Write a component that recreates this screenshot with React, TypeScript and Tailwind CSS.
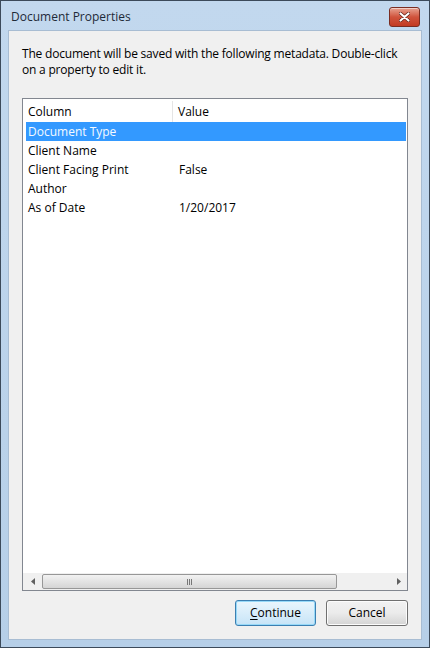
import { useState } from "react";

const rows = [
	{ name: "Document Type", value: "" },
	{ name: "Client Name", value: "" },
	{ name: "Client Facing Print", value: "False" },
	{ name: "Author", value: "" },
	{ name: "As of Date", value: "1/20/2017" },
];

const App = () => {
	const [selected, setSelected] = useState(0);

	return (
		<div
			className="flex h-[648px] w-[430px] flex-col border border-[#3c4a5a] bg-gradient-to-b from-[#c2d8ee] to-[#b6cfe8] text-[12px] text-black"
			style={{ fontFamily: '"Open Sans", "Noto Sans", Arial, sans-serif' }}
		>
			{/* title bar */}
			<div className="flex h-[29px] shrink-0 items-center justify-between pl-[10px] pr-[9px]">
				<span className="mt-[3px] text-[12px] text-[#1e2a38]">Document Properties</span>
				<button className="mt-[2px] flex h-[20px] w-[31px] items-center justify-center rounded-[3px] border border-[#7a2d22] bg-gradient-to-b from-[#e6a190] via-[#d0533c] to-[#c23a22] shadow-[inset_0_1px_0_rgba(255,255,255,0.5)]">
					<svg width="11" height="10" viewBox="0 0 11 10">
						<path d="M1.5 1.5 L9.5 8.5 M9.5 1.5 L1.5 8.5" stroke="#5a1a10" strokeWidth="3.4" strokeLinecap="round" />
						<path d="M1.5 1.5 L9.5 8.5 M9.5 1.5 L1.5 8.5" stroke="#ffffff" strokeWidth="2.2" strokeLinecap="round" />
					</svg>
				</button>
			</div>

			{/* client area */}
			<div className="mx-[7px] mb-[7px] flex flex-1 flex-col border border-[#a8bdd3] bg-[#f0f0f0] px-[13px] pt-[15px] pb-[12px]">
				<p className="leading-[16px] tracking-[-0.2px]">
					The document will be saved with the following metadata. Double-click on a property to edit it.
				</p>

				{/* list view */}
				<div className="mt-[20px] flex h-[493px] flex-col border border-[#828790] bg-white">
					<div className="flex h-[23px] shrink-0 items-center pt-[2px]">
						<div className="flex h-full w-[150px] items-center border-r border-[#e5e5e5] pl-[5px]">
							Column
						</div>
						<div className="pl-[5px]">Value</div>
					</div>
					<div className="flex-1 pl-[3px] pr-[1px]">
						{rows.map((row, i) => (
							<div
								key={row.name}
								onClick={() => setSelected(i)}
								className={`flex h-[19px] items-center pt-[1px] ${
									i === selected ? "bg-[#3399ff] text-[#f4f9ff]" : ""
								}`}
							>
								<span className="w-[150px] pl-[2px]">{row.name}</span>
								<span className="pl-[3px]">{row.value}</span>
							</div>
						))}
					</div>
					{/* horizontal scrollbar */}
					<div className="flex h-[17px] shrink-0 items-center bg-[#f0f0f0]">
						<div className="flex w-[19px] justify-center">
							<svg width="4" height="7" viewBox="0 0 4 7">
								<path d="M4 0 L0 3.5 L4 7 Z" fill="#606060" />
							</svg>
						</div>
						<div className="flex h-[15px] w-[295px] items-center justify-center rounded-[2px] border border-[#979797] bg-gradient-to-b from-[#f2f2f2] to-[#d5d5d5]">
							<div className="flex gap-[1px]">
								<span className="h-[6px] w-[1px] bg-[#777]" />
								<span className="h-[6px] w-[1px] bg-[#777]" />
								<span className="h-[6px] w-[1px] bg-[#777]" />
							</div>
						</div>
						<div className="flex-1" />
						<div className="flex w-[17px] justify-center">
							<svg width="4" height="7" viewBox="0 0 4 7">
								<path d="M0 0 L4 3.5 L0 7 Z" fill="#606060" />
							</svg>
						</div>
					</div>
				</div>

				{/* buttons */}
				<div className="mt-[9px] flex justify-end gap-[10px]">
					<button className="h-[26px] w-[81px] rounded-[3px] border border-[#3c7fb1] bg-gradient-to-b from-[#eaf6fd] to-[#c7e4f7] shadow-[inset_0_0_0_1px_#97d9f8]">
						<span className="underline underline-offset-2">C</span>ontinue
					</button>
					<button className="h-[26px] w-[82px] rounded-[3px] border border-[#707070] bg-gradient-to-b from-[#f2f2f2] via-[#ebebeb] to-[#d4d4d4] shadow-[inset_0_0_0_1px_#fcfcfc]">
						Cancel
					</button>
				</div>
			</div>
		</div>
	);
};

export default App;
